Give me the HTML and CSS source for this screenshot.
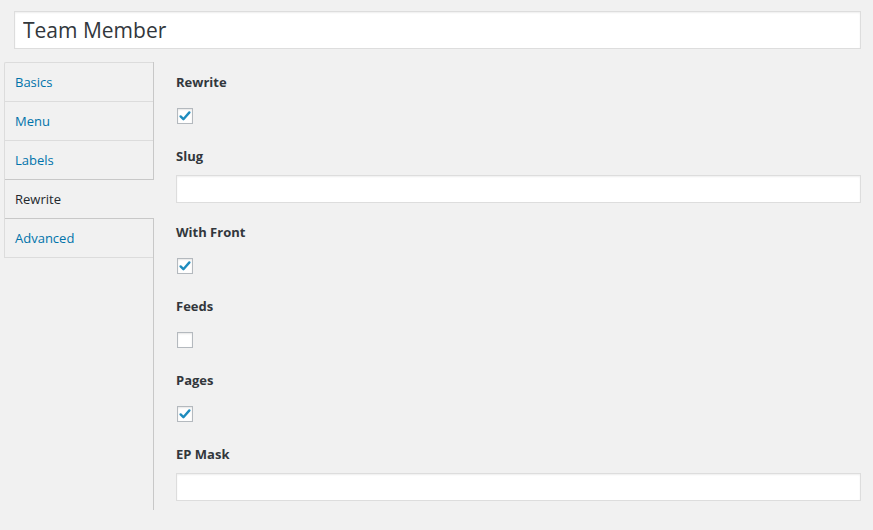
FILE: index.html
```html
<!DOCTYPE html>
<html lang="en">
<head>
    <meta charset="UTF-8">
    <meta name="viewport" content="width=device-width, initial-scale=1.0">
    <title>Edit Post Type</title>
    <link rel="stylesheet" href="styles.css">
</head>
<body>
    <div class="wrap">
        <input type="text" class="title-input" value="Team Member">

        <div class="settings">
            <ul class="tabs">
                <li class="tab"><a href="#basics">Basics</a></li>
                <li class="tab"><a href="#menu">Menu</a></li>
                <li class="tab"><a href="#labels">Labels</a></li>
                <li class="tab active"><a href="#rewrite">Rewrite</a></li>
                <li class="tab"><a href="#advanced">Advanced</a></li>
            </ul>

            <div class="panel">
                <div class="field">
                    <label class="field-label">Rewrite</label>
                    <div class="check-wrap"><span class="checkbox checked"></span></div>
                </div>
                <div class="field">
                    <label class="field-label">Slug</label>
                    <input type="text" class="text-input">
                </div>
                <div class="field">
                    <label class="field-label">With Front</label>
                    <div class="check-wrap"><span class="checkbox checked"></span></div>
                </div>
                <div class="field">
                    <label class="field-label">Feeds</label>
                    <div class="check-wrap"><span class="checkbox"></span></div>
                </div>
                <div class="field">
                    <label class="field-label">Pages</label>
                    <div class="check-wrap"><span class="checkbox checked"></span></div>
                </div>
                <div class="field">
                    <label class="field-label">EP Mask</label>
                    <input type="text" class="text-input">
                </div>
            </div>
        </div>
    </div>
</body>
</html>
```

FILE: styles.css
```css
body {
    margin: 0;
    background-color: #f1f1f1;
    font-family: "Open Sans", "Noto Sans", sans-serif;
    font-size: 13px;
    color: #23282d;
}
.wrap {
    padding: 11px 12px 0 4px;
}
.title-input {
    display: block;
    width: calc(100% - 10px);
    height: 38px;
    margin: 0 0 13px 10px;
    padding: 0 8px;
    box-sizing: border-box;
    border: 1px solid #ddd;
    box-shadow: inset 0 1px 2px rgba(0,0,0,0.07);
    background: #fff;
    font-family: inherit;
    font-size: 21px;
    color: #32373c;
    outline: none;
}
.settings {
    display: flex;
    align-items: flex-start;
}
.tabs {
    width: 149px;
    margin: 0;
    padding: 0;
    list-style: none;
    border-top: 1px solid #dcdcdc;
    border-left: 1px solid #dcdcdc;
    border-top-left-radius: 2px;
    box-sizing: border-box;
    flex-shrink: 0;
}
.tab {
    border-bottom: 1px solid #dcdcdc;
}
.tab a {
    display: block;
    height: 38px;
    line-height: 39px;
    padding-left: 10px;
    color: #0073aa;
    text-decoration: none;
}
.tab.active {
    position: relative;
    margin-top: -1px;
    margin-right: -1px;
    background: #f1f1f1;
    border-top: 1px solid #c8c8c8;
    border-bottom: 1px solid #c8c8c8;
}
.tab.active a {
    color: #23282d;
}
.panel {
    flex: 1;
    border-left: 1px solid #c8c8c8;
    padding: 10px 0 9px 22px;
}
.field {
    margin-bottom: 19px;
}
.field:last-child {
    margin-bottom: 0;
}
.field-label {
    display: block;
    line-height: 20px;
    margin-bottom: 9px;
    font-weight: 700;
    color: #32373c;
}
.check-wrap {
    padding: 7px 0 3px 1px;
    height: 16px;
}
.checkbox {
    display: block;
    width: 16px;
    height: 16px;
    box-sizing: border-box;
    border: 1px solid #b4b9be;
    background: #fff;
    box-shadow: inset 0 1px 2px rgba(0,0,0,0.1);
}
.checkbox.checked {
    background: #fff url("data:image/svg+xml,%3Csvg xmlns='http://www.w3.org/2000/svg' width='14' height='14' viewBox='0 0 14 14'%3E%3Cpath d='M2.6 7.4 L5.4 10.2 L11.4 3.4' fill='none' stroke='%231e8cbe' stroke-width='2.4' stroke-linecap='round' stroke-linejoin='round'/%3E%3C/svg%3E") no-repeat center;
}
.text-input {
    display: block;
    width: 100%;
    height: 28px;
    box-sizing: border-box;
    border: 1px solid #ddd;
    box-shadow: inset 0 1px 2px rgba(0,0,0,0.07);
    background: #fff;
    padding: 3px 5px;
    font-family: inherit;
    font-size: 14px;
    outline: none;
}
```
